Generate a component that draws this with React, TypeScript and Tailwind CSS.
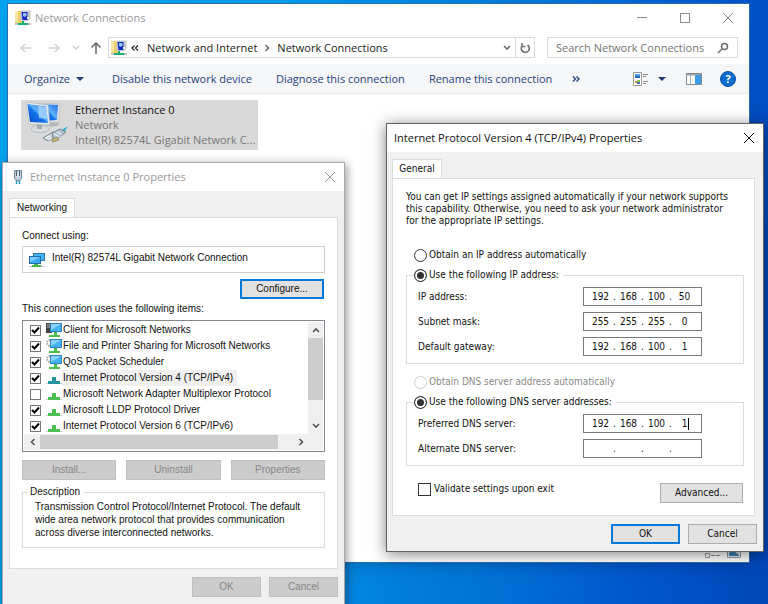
import React from "react";

const shell = "font-['Open_Sans','Noto_Sans',sans-serif] text-[11px]";
const classic = "font-['Liberation_Sans',Arial,sans-serif] text-[10px]";
const tahoma = "font-['DejaVu_Sans_Condensed','DejaVu_Sans',sans-serif] text-[10px]";

function FolderNetIcon() {
  return (
    <svg className="h-4 w-4 shrink-0" viewBox="0 0 16 16" aria-hidden="true">
      <path d="M0 1h7v12H0z" fill="#f0cf68" />
      <path d="M0 1h3v11H0z" fill="#fbe7a0" />
      <path d="M6 .500h9.500v8L13 11H6L5 8z" fill="#c3c8d0" />
      <path d="M6.500 2h6v8h-5z" fill="#1a27c0" />
      <path d="M8 3h3l1 2-2 2-2-1z" fill="#8ec3f8" />
      <path d="M12 7h2v2h-2z" fill="#f2f4f8" />
      <path d="M7 11h2v2h4v2H3v-2h4z" fill="#18b070" />
      <path d="M0 13h3v2H0zM13 13h3v2h-3z" fill="#bfc4ca" />
    </svg>
  );
}

function MonitorNetIcon() {
  return (
    <svg className="h-4 w-4 shrink-0" viewBox="0 0 16 16" aria-hidden="true">
      <path d="M4 1h12v8H4z" fill="#2b78b5" />
      <path d="M5 2h10v6H5z" fill="#4bb4f5" />
      <path d="M0 4h12v8H0z" fill="#1f6cab" />
      <path d="M1 5h10v6H1z" fill="#3ba9f2" />
      <path d="M1 5h10L1 10z" fill="#7fcbfc" />
      <path d="M5 12h4v1h3v2H3v-2h2z" fill="#3fb549" />
      <path d="M0 14h3v1H0zM12 14h3v1h-3z" fill="#b9c0c6" />
    </svg>
  );
}

function BigNetworkIcon() {
  return (
    <svg className="h-11 w-11 shrink-0" viewBox="0 0 44 44" aria-hidden="true">
      <defs>
        <linearGradient id="scr" x1="0" y1="1" x2="1" y2="0">
          <stop offset="0" stopColor="#0a49c4" />
          <stop offset=".45" stopColor="#1273ea" />
          <stop offset=".55" stopColor="#5fb0fa" />
          <stop offset="1" stopColor="#1d6be6" />
        </linearGradient>
      </defs>
      <ellipse cx="27" cy="24" rx="7" ry="2.500" fill="#b4b8bd" />
      <path d="M14 3l21 1-1 18-16 1z" fill="#dfe3e6" stroke="#aeb3b8" strokeWidth=".6" />
      <path d="M16 4l17 1-1 15-14 1z" fill="url(#scr)" />
      <ellipse cx="15" cy="29" rx="9" ry="3.500" fill="#d9dcdf" stroke="#a4a8ac" strokeWidth=".6" />
      <path d="M12 23l5 1v5h-5z" fill="#a8adb2" />
      <path d="M1 2l22 3 2 20-21-1z" fill="#e7eaec" stroke="#adb2b7" strokeWidth=".6" />
      <path d="M2.500 4L21 6.500 23 23 5 22z" fill="url(#scr)" />
      <path d="M13 5.700l8 1.300 2 12-9-1z" fill="#a9d4ff" opacity=".8" />
      <path d="M35 31l8-5-3 5-3 2z" fill="#31b4d6" />
      <path d="M18 38l10-6 5 2-10 7z" fill="#d2dade" stroke="#65737e" strokeWidth=".8" />
      <path d="M27 33l8-4 6 3-9 7-4-1z" fill="#b4c4cf" stroke="#65737e" strokeWidth=".8" />
      <path d="M21 38l4-2M23 40l4-2M29 34l6 3M32 32l5 3" stroke="#f6f8f9" strokeWidth="1" />
      <path d="M26 40l6-3 2 3-6 2z" fill="#c9b46b" stroke="#737766" strokeWidth=".6" />
    </svg>
  );
}

function PlugIcon() {
  return (
    <svg className="h-4 w-3 shrink-0" viewBox="0 0 12 16" aria-hidden="true">
      <path d="M2.500 1.500h7v8l-1.500 2H4l-1.500-2z" fill="#c3d0dc" stroke="#6f8598" />
      <path d="M4 2h1v5H4zM7 2h1v5H7z" fill="#4a6177" />
      <path d="M5.500 2.500h1V8h-1z" fill="#f3f7fa" />
      <path d="M4.500 12v3M7.500 12v3" stroke="#1591cf" strokeWidth="1.500" />
    </svg>
  );
}

type Kind = "client" | "service" | "active" | "protocol";

function ItemIcon({ kind }: { kind: Kind }) {
  if (kind === "active" || kind === "protocol") {
    const c = kind === "active" ? "#26949f" : "#4cc04f";
    return (
      <svg className="h-4 w-4 shrink-0" viewBox="0 0 16 16" aria-hidden="true">
        <path d="M6 7h4v4h4v3H2v-3h4z" fill={c} />
        <path d="M0 13h2v1H0zM14 13h2v1h-2z" fill="#c5ccd2" />
      </svg>
    );
  }
  return (
    <svg className="h-4 w-4 shrink-0" viewBox="0 0 16 16" aria-hidden="true">
      {kind === "client" ? (
        <>
          <path d="M0 1h6v10H0z" fill="#3f4347" />
          <path d="M1 3h3M1 5h3" stroke="#b3b8bd" />
        </>
      ) : (
        <circle cx="4" cy="5" r="3" fill="none" stroke="#a2a8ad" strokeWidth="2" strokeDasharray="1.500 1" />
      )}
      <path d="M4 1h12v9H4z" fill="#2f7fb9" />
      <path d="M5 2h10v7H5z" fill="#45b2f5" />
      <path d="M5 2h10L5 8z" fill="#8ad3fd" />
      <path d="M8 10h3v3h3v2H3v-2h5z" fill="#4cc04f" />
    </svg>
  );
}

function CloseIcon() {
  return (
    <svg className="h-3 w-3" viewBox="0 0 12 12" fill="none" stroke="currentColor" aria-hidden="true">
      <path d="M1 1l10 10M11 1L1 11" />
    </svg>
  );
}

function Chevron({ dir, className }: { dir: "up" | "down" | "left" | "right"; className?: string }) {
  const d = {
    up: "M1 6l3-3 3 3",
    down: "M1 2l3 3 3-3",
    left: "M5.500 1l-3 3 3 3",
    right: "M2.500 1l3 3-3 3",
  }[dir];
  return (
    <svg className={`h-2 w-2 ${className ?? ""}`} viewBox="0 0 8 8" fill="none" stroke="currentColor" strokeWidth="1.600" aria-hidden="true">
      <path d={d} />
    </svg>
  );
}

function Caret() {
  return (
    <svg className="h-1 w-2" viewBox="0 0 8 4" aria-hidden="true">
      <path d="M0 0h8L4 4z" fill="#1f3a6b" />
    </svg>
  );
}

function ExplorerWindow() {
  return (
    <section
      aria-label="Network Connections"
      className={`absolute top-[3px] right-[18px] bottom-[41px] left-[7px] flex flex-col border border-[#2b6ea8] bg-white leading-4 shadow-lg ${shell}`}
    >
      <header className="flex h-[27px] shrink-0 items-center pl-[7px]">
        <FolderNetIcon />
        <h1 className="ml-1 flex-1 text-[#9a9a9a]">Network Connections</h1>
        <div className="flex text-[#8c8c8c]">
          <button aria-label="Minimize" className="flex h-6 w-[43px] items-center justify-center">
            <span className="w-[10px] border-t border-current" />
          </button>
          <button aria-label="Maximize" className="flex h-6 w-[43px] items-center justify-center">
            <span className="size-[10px] border border-current" />
          </button>
          <button aria-label="Close" className="flex h-6 w-[43px] items-center justify-center">
            <CloseIcon />
          </button>
        </div>
      </header>

      <nav className="flex h-[33px] shrink-0 items-center pr-[11px] pl-3">
        <button aria-label="Back" className="text-[#cfcfcf]">
          <svg className="h-3 w-3" viewBox="0 0 12 12" fill="none" stroke="currentColor" strokeWidth="1.400"><path d="M11.500 6H1M5 2L1 6l4 4" /></svg>
        </button>
        <button aria-label="Forward" className="ml-4 text-[#cfcfcf]">
          <svg className="h-3 w-3" viewBox="0 0 12 12" fill="none" stroke="currentColor" strokeWidth="1.400"><path d="M.5 6H11M7 2l4 4-4 4" /></svg>
        </button>
        <button aria-label="Recent locations" className="ml-3 text-[#cfcfcf]"><Chevron dir="down" /></button>
        <button aria-label="Up" className="ml-[10px] text-[#6d6d6d]">
          <svg className="h-3 w-3" viewBox="0 0 12 12" fill="none" stroke="currentColor" strokeWidth="1.600"><path d="M6 12V1M1.500 5.500L6 1l4.500 4.500" /></svg>
        </button>
        <div className="ml-[6px] flex h-[21px] flex-1 items-center border border-[#d9d9d9] pl-[2px] text-[#1b1b1b]">
          <FolderNetIcon />
          <svg className="ml-1 h-2 w-2" viewBox="0 0 8 8" fill="none" stroke="currentColor" strokeWidth="1.200" aria-hidden="true"><path d="M3.500 1.500L1 4l2.500 2.500M7 1.500L4.500 4 7 6.500" /></svg>
          <a href="#internet" className="ml-2">Network and Internet</a>
          <Chevron dir="right" className="mx-[6px] text-[#6d6d6d]" />
          <a href="#connections" className="flex-1">Network Connections</a>
          <button aria-label="Previous locations" className="mr-1 text-[#6d6d6d]"><Chevron dir="down" /></button>
          <button aria-label="Refresh" className="flex h-full w-[19px] items-center justify-center border-l border-[#d9d9d9] text-[#6d6d6d]">
            <svg className="h-3 w-3" viewBox="0 0 12 12" fill="none" stroke="currentColor" strokeWidth="1.600"><path d="M8.500 3A4 4 0 1 1 3 4M3 1v3.500h3.500" /></svg>
          </button>
        </div>
        <label className="ml-3 flex h-[21px] w-[191px] items-center border border-[#d9d9d9] px-2">
          <input aria-label="Search Network Connections" placeholder="Search Network Connections" className="min-w-0 flex-1 outline-none placeholder:text-[#757575]" />
          <svg className="h-3 w-3" viewBox="0 0 12 12" fill="none" stroke="#6d6d6d" strokeWidth="1.500"><circle cx="7.500" cy="4.500" r="3" /><path d="M5.200 6.800L1 11" /></svg>
        </label>
      </nav>

      <div className="flex h-[30px] shrink-0 items-center border-b border-[#e9ebee] bg-[#f4f6f8] pr-[13px] pl-4 text-[#28427a]">
        <button className="flex items-center gap-[6px]">Organize <Caret /></button>
        <button className="ml-7">Disable this network device</button>
        <button className="ml-6">Diagnose this connection</button>
        <button className="ml-6">Rename this connection</button>
        <button aria-label="More commands" className="ml-5">
          <svg className="h-2 w-2" viewBox="0 0 8 8" fill="none" stroke="currentColor" strokeWidth="1.400"><path d="M1 1.500L3.500 4 1 6.500M4.500 1.500L7 4 4.500 6.500" /></svg>
        </button>
        <button aria-label="Change your view" className="ml-auto">
          <svg className="h-[14px] w-4" viewBox="0 0 16 14"><path d="M.5.500h8v13h-8z" fill="#fff" stroke="#9a9a9a" /><path d="M2 2h5v4H2z" fill="#4aa3e0" /><path d="M2 4h5v2H2z" fill="#2c66b5" /><path d="M2 9h2v2H2z" fill="#e57b3c" /><path d="M4 8h3v2H4z" fill="#8bc34a" /><path d="M4 10h3v2H4z" fill="#4a6fc0" /><path d="M10 2.500h5M10 4.500h3M10 9.500h5M10 11.500h3" stroke="#8a8a8a" /></svg>
        </button>
        <button aria-label="View options" className="ml-[9px] flex"><Caret /></button>
        <button aria-label="Preview pane" className="ml-5">
          <svg className="h-3 w-4" viewBox="0 0 16 12"><path d="M.5.500h15v11H.5z" fill="#fff" stroke="#7c8790" /><path d="M1 1h14v1.500H1z" fill="#9aa5ad" /><path d="M9 2h6v9H9z" fill="#3c9be6" /><path d="M4.500 2v9" stroke="#a8b0b6" /></svg>
        </button>
        <button aria-label="Help" className="ml-[18px] flex size-4 items-center justify-center rounded-full border border-[#0a4f9e] bg-[#0a6cce] font-bold text-white">?</button>
      </div>

      <main className="flex-1 px-[13px] pt-[6px]">
        <button className="flex h-[50px] w-[237px] items-start bg-[#d9d9d9] pl-1 text-left leading-[15px]">
          <BigNetworkIcon />
          <span className="min-w-0 flex-1 pt-[2px] pl-[6px] text-[#777]">
            <span className="block text-[#111]">Ethernet Instance 0</span>
            <span className="block">Network</span>
            <span className="block whitespace-nowrap">Intel(R) 82574L Gigabit Network C...</span>
          </span>
        </button>
      </main>

      <footer className="flex h-5 shrink-0 items-center justify-end gap-[6px] pr-2">
        <svg className="h-3 w-4" viewBox="0 0 16 12"><path d="M.5.500h4v3h-4zM.5 7.500h4v4h-4z" fill="#fff" stroke="#999" /><path d="M6 2h4M11 2h4M6 9.500h4M11 9.500h4" stroke="#888" /></svg>
        <svg className="h-3 w-[14px]" viewBox="0 0 14 12"><path d="M.5.500h13v11H.5z" fill="#e7eef4" stroke="#8d98a1" /><path d="M2 7l4-3 6 5v1H2z" fill="#407fae" /></svg>
      </footer>
    </section>
  );
}

function TickBox({ id, checked, dark }: { id: string; checked?: boolean; dark?: boolean }) {
  return (
    <span className="grid place-items-center">
      <input
        id={id}
        type="checkbox"
        defaultChecked={checked}
        className={`col-start-1 row-start-1 appearance-none border bg-white ${dark ? "size-[13px] border-[#333]" : "size-[11px] border-[#777]"}`}
      />
      {checked && (
        <svg className="pointer-events-none col-start-1 row-start-1 h-[9px] w-[9px]" viewBox="0 0 9 9" fill="none" stroke="#000" strokeWidth="2" aria-hidden="true">
          <path d="M1 4l2.500 2.500L8 1.500" />
        </svg>
      )}
    </span>
  );
}

const items: { label: string; kind: Kind; checked: boolean }[] = [
  { label: "Client for Microsoft Networks", kind: "client", checked: true },
  { label: "File and Printer Sharing for Microsoft Networks", kind: "service", checked: true },
  { label: "QoS Packet Scheduler", kind: "service", checked: true },
  { label: "Internet Protocol Version 4 (TCP/IPv4)", kind: "active", checked: true },
  { label: "Microsoft Network Adapter Multiplexor Protocol", kind: "protocol", checked: false },
  { label: "Microsoft LLDP Protocol Driver", kind: "protocol", checked: true },
  { label: "Internet Protocol Version 6 (TCP/IPv6)", kind: "protocol", checked: true },
];

const disabledBtn = "h-5 border border-[#bfbfbf] bg-[#ccc] text-[#888]";

function AdapterDialog() {
  return (
    <section
      role="dialog"
      aria-label="Ethernet Instance 0 Properties"
      className={`absolute top-[162px] left-[2px] w-[343px] border border-[#a8a8a8] bg-[#f0f0f0] pb-[18px] leading-4 text-[#111] shadow-[2px_2px_9px_rgba(0,0,0,0.4)] ${classic}`}
    >
      <header className={`flex h-7 items-center bg-white pr-2 pl-[9px] text-[#9a9a9a] ${shell}`}>
        <PlugIcon />
        <h2 className="ml-[6px] flex-1">Ethernet Instance 0 Properties</h2>
        <button aria-label="Close"><CloseIcon /></button>
      </header>

      <div className="px-[6px] pt-[7px]">
        <button className="-mb-px block h-5 w-[66px] border border-b-0 border-[#dcdcdc] bg-white pb-[2px]">Networking</button>
        <div className="border border-[#dcdcdc] bg-white px-3 pt-[10px] pb-5">
          <span id="using">Connect using:</span>
          <div aria-labelledby="using" className="mt-[2px] flex h-[27px] items-center border border-[#d0d0d0] pl-[6px]">
            <MonitorNetIcon />
            <span className="ml-[7px] pb-1">Intel(R) 82574L Gigabit Network Connection</span>
          </div>
          <div className="mt-[6px] mr-px flex justify-end">
            <button className="h-5 w-[84px] border-2 border-[#0078d7] bg-[#e1e1e1] leading-none">Configure...</button>
          </div>
          <p className="mt-[2px]">This connection uses the following items:</p>
          <div className="mt-[3px] border border-[#828790] p-px">
            <div className="flex">
              <ul className="flex-1 pl-[6px]">
                {items.map((it, i) => (
                  <li key={it.label}>
                    <label htmlFor={`item-${i}`} className="flex h-4 items-center">
                      <TickBox id={`item-${i}`} checked={it.checked} />
                      <span className="ml-[5px] flex"><ItemIcon kind={it.kind} /></span>
                      <span className={`pr-1 pl-px whitespace-nowrap ${it.kind === "active" ? "bg-[#f0f0f0]" : ""}`}>{it.label}</span>
                    </label>
                  </li>
                ))}
              </ul>
              <div className="flex w-[15px] flex-col items-center bg-[#f0f0f0] py-1 text-[#555]">
                <Chevron dir="up" />
                <div className="mt-1 h-[62px] w-full bg-[#cdcdcd]" />
                <Chevron dir="down" className="mt-auto" />
              </div>
            </div>
            <div className="flex h-4 items-center bg-[#f0f0f0] pr-[18px] pl-[5px] text-[#555]">
              <Chevron dir="left" />
              <div className="ml-[3px] h-[14px] w-[238px] bg-[#cdcdcd]" />
              <Chevron dir="right" className="ml-auto" />
            </div>
          </div>
          <div className="mt-2 grid grid-cols-3 gap-[10px]">
            <button disabled className={disabledBtn}>Install...</button>
            <button disabled className={disabledBtn}>Uninstall</button>
            <button disabled className={disabledBtn}>Properties</button>
          </div>
          <fieldset className="mt-1 border border-[#dcdcdc] pr-2 pb-2 pl-3">
            <legend className="-ml-[8px] px-[3px]">Description</legend>
            <p className="leading-[13px]">
              Transmission Control Protocol/Internet Protocol. The default wide area network protocol that provides
              communication across diverse interconnected networks.
            </p>
          </fieldset>
        </div>
        <div className="mt-2 flex justify-end gap-2">
          <button disabled className={`w-[69px] ${disabledBtn}`}>OK</button>
          <button disabled className={`w-[69px] ${disabledBtn}`}>Cancel</button>
        </div>
      </div>
    </section>
  );
}

function Radio({ name, label, checked, disabled }: { name: string; label: string; checked?: boolean; disabled?: boolean }) {
  return (
    <label className={`flex h-4 items-center gap-[2px] ${disabled ? "text-[#8a8a8a]" : ""}`}>
      <input
        type="radio"
        name={name}
        defaultChecked={checked}
        disabled={disabled}
        className="size-[13px] appearance-none rounded-full border border-[#333] bg-white checked:bg-[#333] checked:shadow-[inset_0_0_0_2px_white] disabled:border-[#ccc]"
      />
      {label}
    </label>
  );
}

function IpRow({ label, parts, caret }: { label: string; parts: string[]; caret?: boolean }) {
  return (
    <div role="group" aria-label={label} className="flex h-[19px] items-center justify-between">
      <span>{label}</span>
      <div className="flex h-[19px] w-[119px] items-center border border-[#7a7a7a] bg-white pl-[5px]">
        {parts.map((p, i) => (
          <React.Fragment key={i}>
            {i > 0 && <span className="w-[5px] text-center">.</span>}
            <span className="relative flex">
              <input aria-label={`${label} part ${i + 1}`} defaultValue={p} className="w-[23px] text-center outline-none" />
              {caret && i === 3 && <span className="absolute top-[2px] right-[7px] h-3 w-px bg-black" />}
            </span>
          </React.Fragment>
        ))}
      </div>
    </div>
  );
}

function Ipv4Dialog() {
  return (
    <section
      role="dialog"
      aria-label="Internet Protocol Version 4 (TCP/IPv4) Properties"
      className={`absolute top-[123px] left-[386px] w-[378px] border border-[#5f6468] bg-[#f0f0f0] pb-[7px] leading-4 text-[#111] shadow-[0_2px_14px_rgba(0,0,0,0.5)] ${tahoma}`}
    >
      <header className={`flex h-7 items-center bg-white pr-2 pl-[7px] ${shell}`}>
        <h2 className="flex-1">Internet Protocol Version 4 (TCP/IPv4) Properties</h2>
        <button aria-label="Close"><CloseIcon /></button>
      </header>

      <div className="pt-[7px] pl-[5px]">
        <button className="-mb-px block h-5 w-[50px] border border-b-0 border-[#dcdcdc] bg-white pb-[2px]">General</button>
        <div className="mr-2 border border-[#dcdcdc] bg-white px-[10px] pt-3 pb-3">
          <p className="pl-[3px] leading-[12px]">
            You can get IP settings assigned automatically if your network supports
            <br />
            this capability. Otherwise, you need to ask your network administrator
            <br />
            for the appropriate IP settings.
          </p>
          <div className="mt-5 pl-[11px]"><Radio name="ip" label="Obtain an IP address automatically" /></div>
          <fieldset className="mt-1 ml-[3px] border border-[#dcdcdc] pr-[41px] pb-[7px] pl-[11px]">
            <legend className="-ml-[4px] pr-1"><Radio name="ip" label="Use the following IP address:" checked /></legend>
            <div className="flex flex-col gap-[6px] pt-1">
              <IpRow label="IP address:" parts={["192", "168", "100", "50"]} />
              <IpRow label="Subnet mask:" parts={["255", "255", "255", "0"]} />
              <IpRow label="Default gateway:" parts={["192", "168", "100", "1"]} />
            </div>
          </fieldset>
          <div className="mt-[10px] pl-[11px]"><Radio name="dns" label="Obtain DNS server address automatically" disabled /></div>
          <fieldset className="mt-1 ml-[3px] border border-[#dcdcdc] pr-[41px] pb-[7px] pl-[11px]">
            <legend className="-ml-[4px] pr-1"><Radio name="dns" label="Use the following DNS server addresses:" checked /></legend>
            <div className="flex flex-col gap-[6px] pt-1">
              <IpRow label="Preferred DNS server:" parts={["192", "168", "100", "1"]} caret />
              <IpRow label="Alternate DNS server:" parts={["", "", "", ""]} />
            </div>
          </fieldset>
          <div className="mt-[15px] flex items-start justify-between pr-px pl-[15px]">
            <label htmlFor="validate" className="flex items-center gap-[3px]">
              <TickBox id="validate" dark />
              Validate settings upon exit
            </label>
            <button className="mt-[2px] h-5 w-[83px] border border-[#adadad] bg-[#e1e1e1]">Advanced...</button>
          </div>
        </div>
        <div className="mt-2 flex justify-end gap-2 pr-[6px]">
          <button className="h-5 w-[69px] border-2 border-[#0078d7] bg-[#e1e1e1] leading-none">OK</button>
          <button className="h-5 w-[69px] border border-[#adadad] bg-[#e1e1e1]">Cancel</button>
        </div>
      </div>
    </section>
  );
}

export default function App() {
  return (
    <div className="relative h-screen min-h-[604px] w-full overflow-hidden bg-[linear-gradient(97deg,#00a4ef_0%,#0098e8_35%,#0074d8_65%,#0056cc_85%,#0046b8_100%)]">
      <ExplorerWindow />
      <AdapterDialog />
      <Ipv4Dialog />
    </div>
  );
}
